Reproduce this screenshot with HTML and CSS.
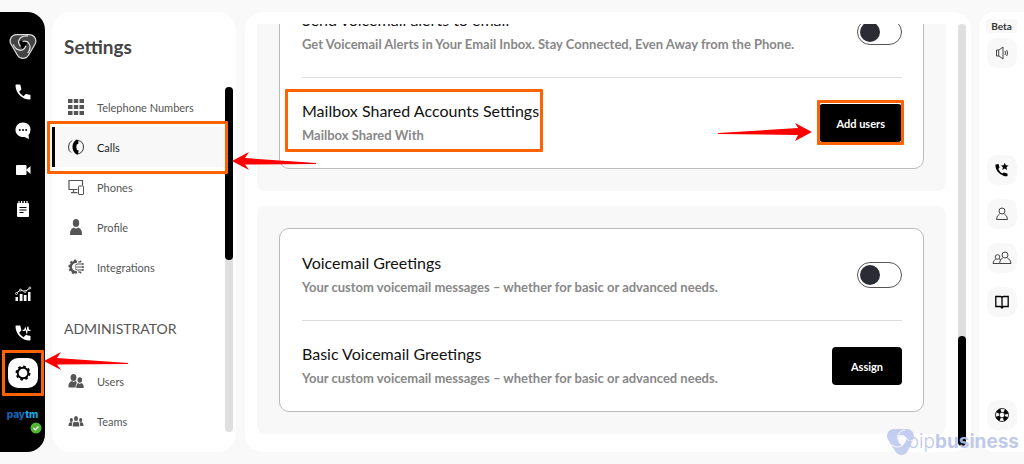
FILE: index.html
```
<!DOCTYPE html>
<html lang="en">
<head>
  <meta charset="UTF-8" />
  <title>Settings - Calls</title>
  <link rel="stylesheet" href="styles.css">
</head>
<body>
  <div class="app">
    <nav class="rail">
      <a href="#" class="rail-logo" aria-label="Home">
        <svg width="28" height="28" viewBox="0 0 28 28">
          <path d="M7.500 8H20.500L14 19Z" fill="#ddd" stroke="#ddd" stroke-width="14" stroke-linejoin="round"/>
          <path d="M7.500 8H20.500L14 19Z" fill="#444" stroke="#444" stroke-width="11.500" stroke-linejoin="round"/>
          <path d="M10 8.500Q14 6.500 18 9Q18 13 14.500 16.500Q10 13 10 8.500Z" fill="#000"/>
          <g fill="none" stroke="#ddd" stroke-width="1.300">
            <path d="M19 3Q11 2.500 9.500 8.500Q9.500 11 11.500 13.500"/>
            <path d="M19 3Q11 2.500 9.500 8.500Q9.500 11 11.500 13.500" transform="rotate(120 14 11.500)"/>
            <path d="M19 3Q11 2.500 9.500 8.500Q9.500 11 11.500 13.500" transform="rotate(240 14 11.500)"/>
          </g>
        </svg>
      </a>
      <a href="#" aria-label="Phone">
        <svg width="18" height="18" viewBox="0 0 24 24"><path fill="#fff" d="M2 3Q2 2 3 2H7.500Q8.500 2 8.700 3Q9 5.500 9.700 7.500Q10 8.300 9.400 9L6.800 11.500Q9 15.500 12.700 17.500L15.200 15Q15.900 14.300 16.700 14.600Q18.700 15.300 21 15.500Q22 15.700 22 16.700V21Q22 22 21 22C10.500 22 2 13.500 2 3Z"/></svg>
      </a>
      <a href="#" aria-label="Messages">
        <svg width="18" height="18" viewBox="0 0 18 18"><path fill="#fff" d="M9 .5C13.500 .5 16.500 3.500 16.500 7.500Q16.500 11 14.500 13L15 17L10.500 15C5 15.500 1.500 12 1.500 8C1.500 4 4.500 .5 9 .5Z"/><g fill="#000"><circle cx="5.800" cy="8" r="1"/><circle cx="9" cy="8" r="1"/><circle cx="12.200" cy="8" r="1"/></g></svg>
      </a>
      <a href="#" aria-label="Video">
        <svg width="18" height="18" viewBox="0 0 18 18" fill="#fff"><rect x="2" y="4" width="10.500" height="10" rx="1"/><path d="M12 9L16.500 5V13Z"/></svg>
      </a>
      <a href="#" aria-label="Notes">
        <svg width="18" height="18" viewBox="0 0 18 18"><rect x="3" y="3" width="12" height="14" rx="1" fill="#fff"/><path d="M5 1V4M7.600 1V4M10.300 1V4M13 1V4" stroke="#fff" stroke-width="1.200"/><path d="M5.500 7.500H12.500M5.500 10H12.500M5.500 12.500H9.500" stroke="#000" stroke-width="1.200"/></svg>
      </a>
      <a href="#" class="rail-push" aria-label="Reports">
        <svg width="18" height="18" viewBox="0 0 18 18"><path d="M1.500 12H4V16H1.500ZM5.700 9H8.500V16H5.700ZM9.800 10H12.500V16H9.800ZM14 7H16.500V16H14Z" fill="#fff"/><path d="M2 8.500L6.500 5L11 6.500L16 3" fill="none" stroke="#fff"/><g fill="#000" stroke="#fff" stroke-width=".8"><circle cx="2.500" cy="8.500" r="1"/><circle cx="6.500" cy="5" r="1"/><circle cx="11" cy="6.500" r="1"/><circle cx="15.800" cy="3" r="1"/></g></svg>
      </a>
      <a href="#" aria-label="Call activity">
        <svg width="18" height="18" viewBox="0 0 24 24"><path fill="#fff" d="M2 3Q2 2 3 2H7.500Q8.500 2 8.700 3Q9 5.500 9.700 7.500Q10 8.300 9.400 9L6.800 11.500Q9 15.500 12.700 17.500L15.200 15Q15.900 14.300 16.700 14.600Q18.700 15.300 21 15.500Q22 15.700 22 16.700V21Q22 22 21 22C10.500 22 2 13.500 2 3Z"/><path d="M11.500 8.500H14L15 5.500L17 11.500L18.500 3.500L19.500 8.500H22" fill="none" stroke="#fff" stroke-width="1.400"/></svg>
      </a>
      <a href="#" class="rail-settings" aria-label="Settings">
        <svg width="18" height="18" viewBox="0 0 18 18" fill="none" stroke="#000"><circle cx="9" cy="9" r="5.300" stroke-width="1.900"/><circle cx="9" cy="9" r="6.600" stroke-width="1.800" stroke-dasharray="2.590 2.590"/></svg>
        <span class="highlight highlight-gear"></span>
        <svg class="arrow arrow-gear" width="86" height="18" viewBox="0 0 86 18"><path d="M0 9L17 0L13 6L84 11V12L13 12.500L17 18Z"/></svg>
      </a>
      <div class="account">
        <span class="paytm"><span>pay</span>tm</span>
        <svg class="status" width="12" height="12" viewBox="0 0 12 12"><circle cx="6" cy="6" r="5.500" fill="#53b332"/><path d="M3.500 6L5.300 7.800L8.500 4.500" fill="none" stroke="#fff" stroke-width="1.200"/></svg>
      </div>
    </nav>

    <aside class="panel settings">
      <h1>Settings</h1>
      <div class="settings-body">
        <div class="menu">
          <a href="#">
            <svg width="16" height="16" viewBox="0 0 16 16" fill="#555"><path d="M0 0H4.500V4H0ZM5.800 0H10.200V4H5.800ZM11.500 0H16V4H11.500ZM0 6H4.500V10H0ZM5.800 6H10.200V10H5.800ZM11.500 6H16V10H11.500ZM0 12H4.500V16H0ZM5.800 12H10.200V16H5.800ZM11.500 12H16V16H11.500Z"/></svg>
            Telephone Numbers
          </a>
          <a href="#" class="active">
            <svg width="16" height="16" viewBox="0 0 16 16"><path d="M4 1.500Q.5 3.500 .5 8Q.5 12 3 13.500M10 1.500Q15.500 2.500 15.500 8Q15.500 14 9 15.200" fill="none" stroke="#333" stroke-width="1"/><path d="M8.500 .5L10 1L10.500 4.500L8.800 5.500Q7.500 8.500 9 11L10.700 11.500L10 15L8.500 15.500Q4.500 13 4.500 8Q4.500 3 8.500 .5Z" fill="#000"/></svg>
            Calls
            <span class="highlight highlight-calls"></span>
            <svg class="arrow arrow-calls" width="86" height="18" viewBox="0 0 86 18"><path d="M0 9L17 0L13 6L84 11V12L13 12.500L17 18Z"/></svg>
          </a>
          <a href="#">
            <svg width="16" height="16" viewBox="0 0 16 16" fill="none" stroke="#555"><path d="M9.500 10.500H1V1.500H14.500V6.500M5.500 10.500V13.500M3 13.700H9.500" stroke-width="1.200"/><rect x="10.500" y="7" width="5" height="8.500" rx=".5"/></svg>
            Phones
          </a>
          <a href="#">
            <svg width="16" height="16" viewBox="0 0 16 16" fill="#555"><ellipse cx="8" cy="4" rx="3.200" ry="4"/><path d="M2 16Q1.500 10.500 5.500 8.500Q8 10.500 10.500 8.500Q14.500 10.500 14 16Z"/></svg>
            Profile
          </a>
          <a href="#">
            <svg width="16" height="16" viewBox="0 0 16 16" fill="none" stroke="#555"><path d="M9 2.800A5.300 5.300 0 1 0 9 13.200" stroke-width="2.600"/><path d="M8 1.200A6.800 6.800 0 1 0 8 14.800" stroke-width="1.600" stroke-dasharray="2.200 2"/><path d="M14 5H9L7 6.500M15 8H7M14 11H9L7 9.500M12 3H10M12 13H10"/><g fill="#555" stroke="none"><circle cx="14.800" cy="5" r="1"/><circle cx="15" cy="8" r="1"/><circle cx="14.800" cy="11" r="1"/><circle cx="12.500" cy="2.500" r="1"/><circle cx="12.500" cy="13.500" r="1"/></g></svg>
            Integrations
          </a>
          <h2>ADMINISTRATOR</h2>
          <a href="#">
            <svg width="16" height="16" viewBox="0 0 16 16" fill="#555"><ellipse cx="5.500" cy="4.500" rx="2.900" ry="3.500"/><path d="M.5 14.500Q0 9 4 8L5.500 9L7.500 8Q8.500 8.500 8.800 10Q7.500 11.500 7.500 14.500Z"/><ellipse cx="11.800" cy="7" rx="2.300" ry="2.800"/><path d="M8.300 15Q8 11 10.300 10L11.800 11L13.300 10Q16 11 15.700 15Z"/></svg>
            Users
          </a>
          <a href="#">
            <svg width="16" height="16" viewBox="0 0 16 16" fill="#555"><ellipse cx="8" cy="5.500" rx="2" ry="2.500"/><ellipse cx="3.300" cy="7" rx="1.600" ry="2"/><ellipse cx="12.700" cy="7" rx="1.600" ry="2"/><path d="M4.700 13.500Q4.500 9.500 6.500 8.500L8 9.500L9.500 8.500Q11.500 9.500 11.300 13.500ZM.5 13Q.3 9.800 2 9.200H4.500Q3.800 10.500 3.900 13ZM15.500 13Q15.700 9.800 14 9.200H11.500Q12.200 10.500 12.100 13Z"/></svg>
            Teams
          </a>
        </div>
        <div class="scrollbar"><div class="thumb thumb-top"></div></div>
      </div>
    </aside>

    <main class="panel content">
      <div class="scroller">
        <section class="section">
          <div class="card">
            <div class="row">
              <div class="row-text">
                <h3>Send voicemail alerts to email</h3>
                <p>Get Voicemail Alerts in Your Email Inbox. Stay Connected, Even Away from the Phone.</p>
              </div>
              <input type="checkbox" class="toggle" aria-label="Send voicemail alerts to email">
            </div>
            <div class="row">
              <div class="row-text">
                <h3>Mailbox Shared Accounts Settings</h3>
                <p>Mailbox Shared With</p>
                <span class="highlight highlight-mailbox"></span>
              </div>
              <div class="action">
                <button type="button">Add users</button>
                <span class="highlight highlight-add"></span>
                <svg class="arrow arrow-add" width="94" height="18" viewBox="0 0 94 18"><path d="M94 9L77 0L80 5L0 10V11L80 12L77 18Z"/></svg>
              </div>
            </div>
          </div>
        </section>
        <section class="section">
          <div class="card">
            <div class="row">
              <div class="row-text">
                <h3>Voicemail Greetings</h3>
                <p>Your custom voicemail messages – whether for basic or advanced needs.</p>
              </div>
              <input type="checkbox" class="toggle" aria-label="Voicemail Greetings">
            </div>
            <div class="row">
              <div class="row-text">
                <h3>Basic Voicemail Greetings</h3>
                <p>Your custom voicemail messages – whether for basic or advanced needs.</p>
              </div>
              <button type="button">Assign</button>
            </div>
          </div>
        </section>
      </div>
      <div class="scrollbar"><div class="thumb thumb-bottom"></div></div>
    </main>

    <aside class="tools">
      <span class="beta">Beta</span>
      <button type="button" class="tools-volume" aria-label="Volume">
        <svg width="16" height="16" viewBox="0 0 16 16" fill="none" stroke="#444"><path d="M2.500 5H5L9 2V14L5 11H2.500ZM4.700 5V11M11 6Q12 8 11 10M12.700 5Q14.500 8 12.700 11"/></svg>
      </button>
      <button type="button" class="tools-push" aria-label="Favourite calls">
        <svg width="16" height="16" viewBox="0 0 16 16"><path d="M1.500 2.500L4.500 2L5.500 5.500L4.300 7Q5.500 9.800 8.300 11.500L9.800 10.500L13.500 11.500V14Q12 14.800 9.500 13.800Q2 10.500 1.500 4.500Z"/><path d="M10.700 .8L11.800 3.200L14.500 3.500L12.500 5.300L13.100 8L10.700 6.500L8.300 8L8.900 5.300L6.900 3.500L9.600 3.200Z"/></svg>
      </button>
      <button type="button" aria-label="Contact">
        <svg width="16" height="16" viewBox="0 0 16 16" fill="none" stroke="#444"><circle cx="8" cy="5" r="3"/><path d="M5.700 8Q2.500 9.500 2.500 13.500H13.500Q13.500 9.500 10.300 8"/></svg>
      </button>
      <button type="button" aria-label="Groups">
        <svg width="20" height="16" viewBox="0 0 20 16" fill="none" stroke="#444"><circle cx="13" cy="5" r="3"/><path d="M10.700 8Q7.500 9.500 7.500 13.500H19Q19 9.500 15.300 8"/><circle cx="5.500" cy="7" r="2.300"/><path d="M3.800 9Q1 10.500 1 13.500H7.500M7.200 9L9 10"/></svg>
      </button>
      <button type="button" aria-label="Directory">
        <svg width="16" height="16" viewBox="0 0 16 16" fill="none" stroke="#000" stroke-width="1.300"><path d="M1.800 2.500H6.500Q8 2.500 8 4Q8 2.500 9.500 2.500H14.200V12.500H9.500L8 14L6.500 12.500H1.800ZM8 4V13.500"/></svg>
      </button>
      <button type="button" class="tools-push" aria-label="Help">
        <svg width="16" height="16" viewBox="0 0 16 16" fill="none" stroke="#000"><circle cx="8" cy="8" r="6.500" stroke-width=".8"/><circle cx="8" cy="8" r="2.800" stroke-width=".8"/><circle cx="8" cy="8" r="4.700" stroke-width="3.600" stroke-dasharray="3.900 3.480" stroke-dashoffset="-1.740"/></svg>
      </button>
    </aside>
  </div>

  <div class="watermark">
    <svg width="30" height="28" viewBox="0 0 30 28">
      <path d="M8 8H21L15.500 20Z" fill="#bdc9f0" stroke="#bdc9f0" stroke-width="14" stroke-linejoin="round"/>
      <path d="M12 9Q16 7 20 9.500Q20 14 16.500 18Q12 13 12 9Z" fill="#fbfbfb"/>
      <path d="M19 2Q12 3 11.500 9.500Q12 14 16.500 18M27 12Q22 14 20 10Q18 6 12 8M6 17Q12 21 16 17.500Q20 14 20 10" fill="none" stroke="#fbfbfb"/>
    </svg>
    <span class="watermark-text"><span>oip</span>business</span>
  </div>
</body>
</html>
```
FILE: styles.css
```
* {
  box-sizing: border-box;
}

body {
  margin: 0;
  font-family: Lato, "Open Sans", sans-serif;
  background-color: #f9f9f9;
  color: #111;
}

h1, h2, h3, p {
  margin: 0;
}

a {
  color: inherit;
  text-decoration: none;
}

svg {
  flex: none;
}

.app {
  display: flex;
  height: 100vh;
  padding: 12px 0;
}

/* left icon rail */
.rail {
  position: relative;
  z-index: 3;
  display: flex;
  flex-direction: column;
  align-items: center;
  gap: 21px;
  width: 45px;
  margin-right: 7px;
  padding: 21px 0 18px;
  background: #000;
  border-radius: 0 18px 18px 0;
}

.rail a {
  display: flex;
}

.rail .rail-logo {
  margin-bottom: 1px;
}

.rail .rail-push {
  margin-top: auto;
}

.rail .rail-settings {
  position: relative;
  align-items: center;
  justify-content: center;
  width: 30px;
  height: 30px;
  margin: -5px 0 -3px;
  background: #fff;
  border-radius: 10px;
}

.account {
  display: flex;
  flex-direction: column;
  align-items: center;
  height: 28px;
}

.paytm {
  font-family: Inter, sans-serif;
  font-size: 10px;
  line-height: 16px;
  font-weight: 800;
  color: #1fa5e0;
}

.paytm span {
  color: #1465b8;
}

.status {
  align-self: flex-end;
  margin-right: -4px;
}

.panel {
  background: #fff;
  border-radius: 18px;
}

/* settings menu */
.settings {
  position: relative;
  z-index: 2;
  display: flex;
  flex-direction: column;
  width: 184px;
  margin-right: 9px;
  padding: 20px 3px 20px 0;
}

.settings h1 {
  padding-left: 12px;
  margin-bottom: 25px;
  font-size: 19px;
  line-height: 30px;
  font-weight: 700;
  color: #444;
}

.settings-body {
  display: flex;
  flex: 1;
  min-height: 0;
}

.menu {
  flex: 1;
}

.menu a {
  position: relative;
  display: flex;
  align-items: center;
  gap: 13px;
  height: 40px;
  padding-left: 16px;
  font-size: 11px;
  color: #555;
}

.menu a.active {
  padding-left: 13px;
  border-left: 3px solid #000;
  background: #f8f8f8;
  color: #222;
}

.menu h2 {
  padding: 30px 0 20px 12px;
  font-size: 14px;
  line-height: 24px;
  font-weight: 400;
  color: #555;
}

.scrollbar {
  display: flex;
  flex-direction: column;
  width: 8px;
  background: #dfdfdf;
  border-radius: 4px;
}

.thumb {
  background: #000;
  border-radius: 4px;
}

.thumb-top {
  height: 50%;
}

.thumb-bottom {
  height: 26%;
  margin-top: auto;
}

/* main content */
.content {
  display: flex;
  flex: 1;
  min-width: 0;
  gap: 12px;
  margin-right: 8px;
  padding: 12px 5px 6px 12px;
}

.scroller {
  display: flex;
  flex: 1;
  flex-direction: column;
  justify-content: flex-end;
  gap: 15px;
  min-width: 0;
  padding-bottom: 12px;
  overflow: hidden;
}

.section {
  flex: none;
  padding: 22px;
  background: #f8f8f8;
  border-radius: 8px;
}

.card {
  padding: 0 21px 0 22px;
  background: #fff;
  border: 1px solid #bbb;
  border-radius: 10px;
}

.row {
  display: flex;
  align-items: center;
  justify-content: space-between;
  height: 91px;
}

.row + .row {
  border-top: 1px solid #ddd;
}

.row-text {
  position: relative;
}

.row h3 {
  font-size: 16px;
  line-height: 25px;
  font-weight: 400;
}

.row p {
  font-size: 13px;
  line-height: 25px;
  font-weight: 700;
  color: #888;
}

.toggle {
  display: flex;
  align-items: center;
  width: 45px;
  height: 26px;
  margin: 0;
  padding: 2px;
  appearance: none;
  background: #fff;
  border: 1px solid #555;
  border-radius: 13px;
}

.toggle::before {
  content: "";
  width: 20px;
  height: 20px;
  background: #2b2b35;
  border-radius: 50%;
}

.toggle:checked {
  justify-content: flex-end;
}

.row button {
  min-width: 70px;
  height: 38px;
  padding: 0 17px;
  font-family: inherit;
  font-size: 11px;
  font-weight: 700;
  color: #fff;
  background: #000;
  border: none;
  border-radius: 4px;
  cursor: pointer;
}

.action {
  position: relative;
}

/* right tool column */
.tools {
  display: flex;
  flex-direction: column;
  align-items: center;
  gap: 14px;
  width: 45px;
  padding: 7px 0 22px;
  background: #fff;
  border-radius: 16px 0 0 16px;
}

.beta {
  width: 31px;
  margin-bottom: -9px;
  font-size: 10px;
  line-height: 14px;
  font-weight: 700;
  text-align: center;
  color: #333;
  background: #f8f8f8;
  border-radius: 3px;
}

.tools button {
  display: flex;
  align-items: center;
  justify-content: center;
  width: 30px;
  height: 30px;
  padding: 0;
  background: #f8f8f8;
  border: none;
  border-radius: 10px;
  cursor: pointer;
}

.tools .tools-volume {
  margin-bottom: 3px;
}

.tools .tools-push {
  margin-top: auto;
}

/* walkthrough markers */
.highlight {
  position: absolute;
  border: 3px solid #ff6200;
  border-radius: 1px;
  pointer-events: none;
}

.highlight-gear {
  inset: -8px -6px;
}

.highlight-calls {
  inset: -6px -3px -7px -8px;
}

.highlight-mailbox {
  inset: -9px -4px -4px -17px;
}

.highlight-add {
  inset: -4px -2px -3px;
}

.arrow {
  position: absolute;
  fill: #f00;
  pointer-events: none;
}

.arrow-gear {
  top: -6px;
  left: 36px;
}

.arrow-calls {
  top: 25px;
  left: 177px;
}

.arrow-add {
  top: 19px;
  right: 90px;
}

.watermark {
  position: absolute;
  right: 5px;
  bottom: 8px;
  z-index: 4;
  display: flex;
  align-items: center;
  opacity: 0.9;
}

.watermark-text {
  margin-left: -8px;
  font-family: Inter, sans-serif;
  font-size: 19px;
  line-height: 24px;
  font-weight: 700;
  color: #b9c4e8;
}

.watermark-text span {
  font-weight: 300;
}
```
